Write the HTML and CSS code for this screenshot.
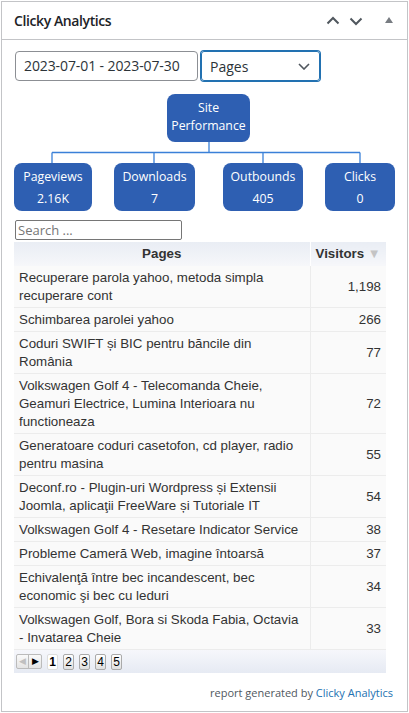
FILE: index.html
```html
<!DOCTYPE html>
<html lang="ro">
<head>
<meta charset="utf-8">
<title>Clicky Analytics</title>
<link rel="stylesheet" href="styles.css">
</head>
<body>
<div class="postbox">
  <div class="postbox-header">
    <h2 class="title">Clicky Analytics</h2>
    <div class="handles">
      <svg class="h-up" width="14" height="9" viewBox="0 0 14 9"><path d="M1.5 7.5 L7 2 L12.5 7.5" fill="none" stroke="#50575e" stroke-width="2"/></svg>
      <svg class="h-down" width="14" height="9" viewBox="0 0 14 9"><path d="M1.5 1.5 L7 7 L12.5 1.5" fill="none" stroke="#50575e" stroke-width="2"/></svg>
      <svg class="h-tri" width="8" height="6" viewBox="0 0 8 6"><path d="M0 6 L4 0 L8 6 Z" fill="#787c82"/></svg>
    </div>
  </div>
  <div class="inside">
    <div class="controls">
      <div class="date">2023-07-01 - 2023-07-30</div>
      <div class="select">
        <span>Pages</span>
        <svg width="12" height="7" viewBox="0 0 12 7"><path d="M1 1 L6 6 L11 1" fill="none" stroke="#50575e" stroke-width="1.6"/></svg>
      </div>
    </div>

    <div class="tree">
      <div class="node root">Site<br>Performance</div>
      <svg class="links" width="380" height="21" viewBox="0 0 380 21">
        <g stroke="#3a80d8" stroke-width="1.3" fill="none">
          <path d="M195 0 V10.5"/>
          <path d="M38 10.5 H346"/>
          <path d="M38 10.5 V21"/>
          <path d="M140 10.5 V21"/>
          <path d="M249 10.5 V21"/>
          <path d="M346 10.5 V21"/>
        </g>
      </svg>
      <div class="children">
        <div class="node child c1"><span>Pageviews</span><span>2.16K</span></div>
        <div class="node child c2"><span>Downloads</span><span>7</span></div>
        <div class="node child c3"><span>Outbounds</span><span>405</span></div>
        <div class="node child c4"><span>Clicks</span><span>0</span></div>
      </div>
    </div>

    <div class="search"><span>Search ...</span></div>

    <table class="report">
      <thead>
        <tr><th class="col-page">Pages</th><th class="col-vis">Visitors <span class="sort">&#9660;</span></th></tr>
      </thead>
      <tbody>
        <tr><td>Recuperare parola yahoo, metoda simpla recuperare cont</td><td class="num">1,198</td></tr>
        <tr><td>Schimbarea parolei yahoo</td><td class="num">266</td></tr>
        <tr><td>Coduri SWIFT și BIC pentru băncile din România</td><td class="num">77</td></tr>
        <tr><td>Volkswagen Golf 4 - Telecomanda Cheie, Geamuri Electrice, Lumina Interioara nu functioneaza</td><td class="num">72</td></tr>
        <tr><td>Generatoare coduri casetofon, cd player, radio pentru masina</td><td class="num">55</td></tr>
        <tr><td>Deconf.ro - Plugin-uri Wordpress și Extensii Joomla, aplicaţii FreeWare și Tutoriale IT</td><td class="num">54</td></tr>
        <tr><td>Volkswagen Golf 4 - Resetare Indicator Service</td><td class="num">38</td></tr>
        <tr><td>Probleme Cameră Web, imagine întoarsă</td><td class="num">37</td></tr>
        <tr><td>Echivalenţă între bec incandescent, bec economic şi bec cu leduri</td><td class="num">34</td></tr>
        <tr><td>Volkswagen Golf, Bora si Skoda Fabia, Octavia - Invatarea Cheie</td><td class="num">33</td></tr>
      </tbody>
    </table>
    <div class="pager">
      <div class="arrows">
        <span class="arrow prev">&#9664;</span><span class="arrow next">&#9654;</span>
      </div>
      <span class="pg current">1</span>
      <span class="pg">2</span>
      <span class="pg">3</span>
      <span class="pg">4</span>
      <span class="pg">5</span>
    </div>

    <div class="footer">report generated by <a href="#">Clicky Analytics</a></div>
  </div>
</div>
</body>
</html>
```

FILE: styles.css
```css
* { box-sizing: border-box; }
html, body { margin: 0; padding: 0; background: #fff; }
body {
  font-family: "Open Sans", "Noto Sans", sans-serif;
  color: #2c3338;
  padding: 1px;
}
.postbox {
  width: 407px;
  height: 711px;
  border: 1px solid #c3c4c7;
  background: #fff;
}
.postbox-header {
  height: 38px;
  border-bottom: 1px solid #c3c4c7;
  display: flex;
  align-items: center;
  justify-content: space-between;
  padding: 0 0 0 12px;
}
.title {
  margin: 0;
  font-size: 14px;
  font-weight: 600;
  color: #1d2327;
  letter-spacing: -0.4px;
}
.handles {
  display: flex;
  align-items: center;
  padding-right: 14px;
}
.h-up { margin-right: 9px; margin-top: -1px; }
.h-down { margin-right: 22px; margin-top: 1px; }
.h-tri { margin-top: -1px; }

.inside { padding: 11px 12px 0 12px; }

.controls { display: flex; align-items: center; }
.date {
  width: 183px;
  height: 30px;
  border: 1px solid #8c8f94;
  border-radius: 4px;
  font-size: 14px;
  line-height: 28px;
  padding-left: 8px;
  color: #2c3338;
  margin-left: 1px;
  letter-spacing: -0.1px;
}
.select {
  margin-left: 3px;
  width: 119px;
  height: 30px;
  border: 1px solid #2271b1;
  box-shadow: 0 0 0 1px #2271b1;
  border-radius: 3px;
  display: flex;
  align-items: center;
  justify-content: space-between;
  padding: 0 9px 0 8px;
  font-size: 14px;
  color: #2c3338;
}

.tree { margin-top: 13px; }
.node {
  background: #2e5fb2;
  color: #fff;
  border-radius: 8px;
  text-align: center;
  font-size: 12.3px;
}
.root {
  width: 83px;
  height: 48px;
  margin-left: 153px;
  line-height: 18px;
  padding-top: 5px;
}
.links { display: block; }
.children { display: flex; }
.child {
  height: 48px;
  display: flex;
  flex-direction: column;
  align-items: center;
  padding-top: 3px;
  line-height: 22px;
}
.c1 { width: 78px; }
.c2 { width: 81px; margin-left: 22px; }
.c3 { width: 80px; margin-left: 28px; }
.c4 { width: 70px; margin-left: 22px; }

.search {
  margin-top: 9px;
  margin-left: 1px;
  width: 167px;
  height: 20px;
  border: 1px solid #767676;
  border-radius: 2px;
  font-size: 13px;
  line-height: 18px;
  padding-left: 2px;
  color: #767676;
}

.report {
  margin-top: 2px;
  width: 372px;
  table-layout: fixed;
  border-collapse: collapse;
  font-family: "Liberation Sans", Arial, sans-serif;
  font-size: 13.33px;
  color: #333;
}
.report th {
  height: 24px;
  font-weight: bold;
  background: linear-gradient(#e9edf4, #f6f7fa);
  color: #333;
  padding: 0 5px;
  line-height: 18px;
}
.report .col-page { width: 296px; text-align: center; }
.report .col-vis { text-align: right; padding-right: 6px; white-space: nowrap; }
.report th + th { border-left: 1px solid #fff; }
.sort { color: #c4c4c4; font-size: 13px; }
.report td {
  background: #fafafa;
  border-bottom: 1px solid #ececec;
  line-height: 18px;
  padding: 3px 5px 2px 5px;
  vertical-align: middle;
}
.report td + td { border-left: 1px solid #ececec; }
.report td.num { text-align: right; }

.pager {
  width: 372px;
  height: 23px;
  background: linear-gradient(#f6f7fb, #e6eaf3);
  display: flex;
  align-items: center;
  padding-left: 2px;
  font-family: "Liberation Sans", Arial, sans-serif;
}
.arrows {
  display: flex;
  height: 15px;
  border: 1px solid #bbb;
  border-radius: 2px;
  background: linear-gradient(#fafafa, #e4e4e4);
  margin-right: 5px;
}
.arrow {
  width: 12px;
  font-size: 9px;
  line-height: 13px;
  text-align: center;
}
.prev { color: #c0c0c0; border-right: 1px solid #bbb; }
.next { color: #000; }
.pg {
  width: 11px;
  height: 16px;
  border: 1px solid #aaa;
  border-radius: 2px;
  background: linear-gradient(#fff, #e0e0e0);
  font-size: 12px;
  line-height: 14px;
  text-align: center;
  margin-right: 5px;
  color: #000;
}
.pg.current { background: #fff; font-weight: bold; border-color: #ddd; }

.footer {
  margin-top: 12px;
  text-align: right;
  font-size: 11px;
  color: #50575e;
  padding-right: 2px;
}
.footer a { color: #2271b1; text-decoration: none; }
```
